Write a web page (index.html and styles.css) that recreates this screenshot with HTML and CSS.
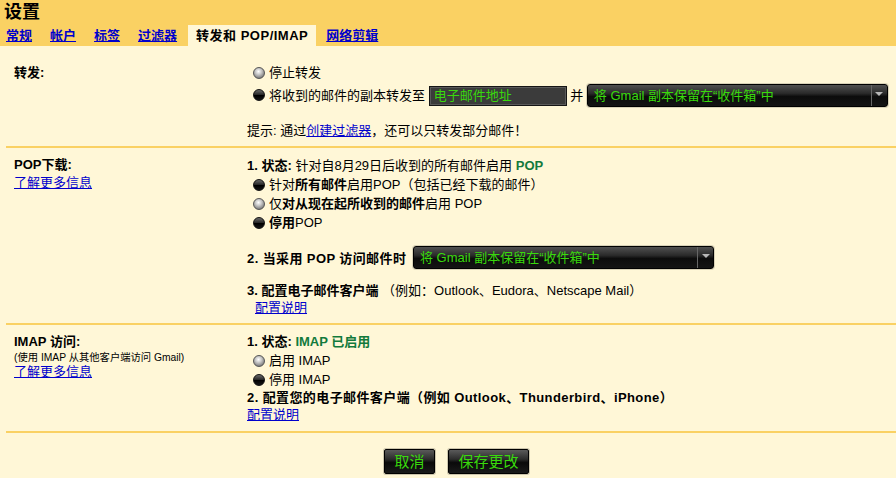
FILE: index.html
```html
<!DOCTYPE html>
<html lang="zh-CN">
<head>
<meta charset="utf-8">
<title>设置</title>
<link rel="stylesheet" href="styles.css">
</head>
<body>
<div class="header">
  <div class="title">设置</div>
  <div class="tabs">
    <a class="tab" href="#">常规</a>
    <a class="tab" href="#">帐户</a>
    <a class="tab" href="#">标签</a>
    <a class="tab" href="#">过滤器</a>
    <span class="tab active">转发和 POP/IMAP</span>
    <a class="tab" href="#">网络剪辑</a>
  </div>
</div>
<div class="content">
  <div class="sec sec-fwd">
    <div class="label"><div class="lbl">转发:</div></div>
    <div class="body">
      <div class="opt"><span class="radio light"></span>停止转发</div>
      <div class="opt fwd-row"><span class="radio dark"></span>将收到的邮件的副本转发至 <span class="input">电子邮件地址</span> 并 <span class="select"><span class="sel-text">将 Gmail 副本保留在“收件箱”中</span><span class="sel-arrow"><span class="tri"></span></span></span></div>
      <div class="hint">提示: 通过<a href="#">创建过滤器</a>，还可以只转发部分邮件！</div>
    </div>
  </div>
  <div class="sec sec-pop">
    <div class="label">
      <div class="lbl">POP下载:</div>
      <div class="lbl-link"><a href="#">了解更多信息</a></div>
    </div>
    <div class="body">
      <div class="row19"><b>1. 状态:</b> 针对自8月29日后收到的所有邮件启用 <b class="ok">POP</b></div>
      <div class="row19 opt"><span class="radio dark"></span>针对<b>所有邮件</b>启用POP（包括已经下载的邮件）</div>
      <div class="row19 opt"><span class="radio light"></span>仅<b>对从现在起所收到的邮件</b>启用 POP</div>
      <div class="row19 opt"><span class="radio dark"></span><b>停用</b>POP</div>
      <div class="when-row"><b class="when-label">2. 当采用 POP 访问邮件时</b><span class="select sel2"><span class="sel-text">将 Gmail 副本保留在“收件箱”中</span><span class="sel-arrow"><span class="tri"></span></span></span></div>
      <div class="row17 cfg"><b>3. 配置电子邮件客户端</b>&nbsp;（例如：Outlook、Eudora、Netscape Mail）</div>
      <div class="row17 cfg-link"><a href="#">配置说明</a></div>
    </div>
  </div>
  <div class="sec sec-imap">
    <div class="label">
      <div class="lbl">IMAP 访问:</div>
      <div class="small">(使用 IMAP 从其他客户端访问 Gmail)</div>
      <div class="lbl-link2"><a href="#">了解更多信息</a></div>
    </div>
    <div class="body">
      <div class="row18"><b>1. 状态:</b> <b class="ok">IMAP 已启用</b></div>
      <div class="row19 opt"><span class="radio light"></span>启用 IMAP</div>
      <div class="row19 opt"><span class="radio dark"></span>停用 IMAP</div>
      <div class="row17"><b class="wide">2. 配置您的电子邮件客户端（例如 Outlook、Thunderbird、iPhone）</b></div>
      <div class="row17"><a href="#">配置说明</a></div>
    </div>
  </div>
  <div class="buttons">
    <span class="btn btn-cancel">取消</span>
    <span class="btn btn-save">保存更改</span>
  </div>
</div>
</body>
</html>
```
FILE: styles.css
```css
html, body {
  margin: 0;
  padding: 0;
}
body {
  font-family: "Liberation Sans", "Noto Sans CJK SC", sans-serif;
  font-size: 13px;
  color: #000;
  background: #fff7d7;
  width: 896px;
  height: 478px;
  overflow: hidden;
}
a {
  color: #0000cc;
  text-decoration: underline;
}
b {
  font-weight: bold;
}

/* header */
.header {
  background: #fad163;
}
.title {
  height: 25px;
  line-height: 24px;
  font-size: 18px;
  font-weight: bold;
  padding-left: 4px;
}
.tabs {
  display: flex;
  gap: 2px;
  height: 21px;
}
.tab {
  display: block;
  padding: 0 8px;
  line-height: 21px;
  font-weight: bold;
}
.tab:first-child {
  padding-left: 6px;
}
.tab.active {
  background: #fff7d7;
  color: #000;
  letter-spacing: 0.5px;
  margin-left: 1px;
}

/* sections */
.sec {
  display: flex;
  margin-left: 6px;
  border-bottom: 2px solid #fad163;
}
.label {
  width: 233px;
  padding-left: 8px;
  flex: none;
}
.body {
  flex: 1;
}
.lbl {
  font-weight: bold;
  line-height: 18px;
}
.lbl-link {
  line-height: 18px;
}

.sec-fwd {
  padding: 18px 0 6px;
}
.opt {
  line-height: 18px;
  display: flex;
  align-items: center;
}
.fwd-row {
  display: block;
  height: 23px;
  line-height: 23px;
  margin-top: 2px;
  white-space: nowrap;
}
.fwd-row .radio {
  display: inline-block;
  vertical-align: -1px;
}
.hint {
  margin-top: 15px;
  line-height: 18px;
}

.radio {
  width: 12px;
  height: 12px;
  border-radius: 50%;
  margin: 0 4px 0 6px;
  flex: none;
  box-sizing: border-box;
}
.radio.light {
  background: radial-gradient(circle at 45% 35%, #ffffff 0%, #c9c9c9 35%, #8a8a8a 70%, #4f4f4f 100%);
  border: 1px solid #555;
}
.radio.dark {
  background: linear-gradient(to bottom, #6a6a6a 0%, #2a2a2a 45%, #000 55%, #151515 100%);
  border: 1px solid #111;
}

.input {
  display: inline-block;
  vertical-align: middle;
  width: 138px;
  height: 20px;
  box-sizing: border-box;
  background: #3b3b3b;
  border: 1px solid #151515;
  box-shadow: inset 0 0 0 1px #5a5a5a;
  color: #39d90c;
  line-height: 18px;
  padding-left: 4px;
  margin-top: -2px;
}

.select {
  display: inline-flex;
  vertical-align: middle;
  align-items: stretch;
  width: 301px;
  height: 23px;
  box-sizing: border-box;
  border: 1px solid #000;
  border-radius: 3px;
  background: linear-gradient(to bottom, #505050 0%, #2a2a2a 40%, #0c0c0c 55%, #141414 100%);
  box-shadow: 0 0 0 1px rgba(0, 0, 0, 0.15);
  color: #39d90c;
  line-height: 21px;
  margin-top: -2px;
}
.sel-text {
  flex: 1;
  padding-left: 6px;
  white-space: nowrap;
  overflow: hidden;
}
.sel-arrow {
  width: 16px;
  border-left: 1px solid #666;
  display: flex;
  justify-content: center;
  padding-top: 7px;
  box-sizing: border-box;
}
.tri {
  width: 0;
  height: 0;
  border-left: 4px solid transparent;
  border-right: 4px solid transparent;
  border-top: 4px solid #b8b8b8;
}

/* POP */
.sec-pop {
  padding: 8px 0 7px;
}
.row19 {
  line-height: 19px;
}
.row18 {
  line-height: 18px;
}
.row17 {
  line-height: 17px;
}
.ok {
  color: #127a3c;
}
.when-row {
  display: flex;
  align-items: center;
  height: 23px;
  margin-top: 14px;
  white-space: nowrap;
}
.when-label {
  width: 161px;
  letter-spacing: 0.4px;
}
.when-row .select {
  margin-left: 5px;
  margin-top: 0;
}
.cfg {
  margin-top: 13px;
}
.cfg-link {
  padding-left: 8px;
}

/* IMAP */
.sec-imap {
  padding: 8px 0 8px;
}
.small {
  font-size: 10.3px;
  line-height: 13px;
}
.lbl-link2 {
  line-height: 16px;
}
.wide {
  letter-spacing: 0.4px;
}

/* buttons */
.buttons {
  display: flex;
  justify-content: center;
  gap: 13px;
  padding: 16px 0 0 17px;
}
.btn {
  display: block;
  height: 25px;
  box-sizing: border-box;
  border: 1px solid #000;
  border-radius: 2px;
  background: linear-gradient(to bottom, #5a5a5a 0%, #2c2c2c 40%, #0a0a0a 55%, #1a1a1a 100%);
  box-shadow: 0 0 0 1px rgba(0, 0, 0, 0.2);
  color: #39d90c;
  font-size: 15px;
  line-height: 23px;
  text-align: center;
}
.btn-cancel {
  width: 51px;
}
.btn-save {
  width: 81px;
}
```
